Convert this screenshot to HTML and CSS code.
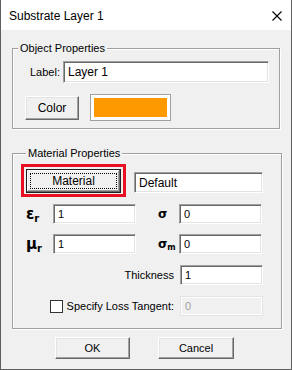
FILE: index.html
```html
<!DOCTYPE html>
<html lang="en">
<head>
    <meta charset="UTF-8" />
    <title>Substrate Layer 1</title>
    <link rel="stylesheet" href="styles.css">
</head>
<body>
<div class="window">
    <div class="titlebar">
        <span class="title">Substrate Layer 1</span>
        <svg class="close" width="10" height="10" viewBox="0 0 10 10">
            <path d="M0.5 0.5L9.5 9.5M9.5 0.5L0.5 9.5" stroke="#000" stroke-width="1.1" fill="none"/>
        </svg>
    </div>

    <div class="body">
        <!-- 对象属性 -->
        <fieldset class="group group-obj">
            <legend>Object Properties</legend>
            <div class="row label-row">
                <label for="layerName">Label:</label>
                <input id="layerName" class="field field-wide" value="Layer 1">
            </div>
            <div class="row color-row">
                <button class="btn btn-color">Color</button>
                <div class="swatch"><div class="swatch-fill"></div></div>
            </div>
        </fieldset>

        <!-- 材料属性 -->
        <fieldset class="group group-mat">
            <legend>Material Properties</legend>
            <div class="row mat-row">
                <div class="highlight">
                    <button class="btn btn-default"><span class="focus">Material</span></button>
                </div>
                <input class="field field-name" value="Default">
            </div>
            <div class="row prop-row">
                <span class="sym">&#949;<sub>r</sub></span>
                <input class="field field-num" value="1">
                <span class="sym sym-right">&#963;</span>
                <input class="field field-num" value="0">
            </div>
            <div class="row prop-row row-gap">
                <span class="sym">&#956;<sub>r</sub></span>
                <input class="field field-num" value="1">
                <span class="sym sym-right">&#963;<sub>m</sub></span>
                <input class="field field-num" value="0">
            </div>
            <div class="row end-row row-gap2">
                <span class="end-label">Thickness</span>
                <input class="field field-num" value="1">
            </div>
            <div class="row end-row row-gap2">
                <label class="check"><input type="checkbox" class="checkbox"> Specify Loss Tangent:</label>
                <input class="field field-num" value="0" disabled>
            </div>
        </fieldset>

        <div class="actions">
            <button class="btn btn-ok">OK</button>
            <button class="btn btn-cancel">Cancel</button>
        </div>
    </div>
</div>
</body>
</html>
```

FILE: styles.css
```css
/* -------------------- 基础 -------------------- */
body{
    margin:0;padding:0;
    font-family:'Liberation Sans',Arial,sans-serif;font-size:11px;color:#000;
    background:#f0f0f0;
}
.window{
    width:292px;height:370px;box-sizing:border-box;
    border:1px solid #5f5f5f;border-top:none;
    background:#f0f0f0;display:flex;flex-direction:column;
}

/* -------------------- 标题栏 -------------------- */
.titlebar{
    height:30px;background:#fff;flex:none;
    display:flex;align-items:center;justify-content:space-between;
    padding:0 9px 0 8px;
}
.title{font-size:12px;line-height:14px;margin-top:1px}
.close{display:block;margin-top:1px}

.body{padding:11px 12px 0 11px;display:flex;flex-direction:column}

/* -------------------- 分组框 -------------------- */
.group{
    margin:0;padding:0;width:268px;box-sizing:border-box;
    border:1px solid #a0a0a0;
    box-shadow:1px 1px 0 #fff,inset 1px 1px 0 #fff;
}
.group legend{
    padding:0 2px;margin-left:5px;line-height:14px;background:#f0f0f0;
}
.group-obj{padding-bottom:7px}
.group-mat{margin-top:17px;padding:0 18px 12px 8px}

.row{display:flex;align-items:center}

/* -------------------- 输入框 -------------------- */
.field{
    box-sizing:border-box;height:20px;margin:0;padding:0 4px;
    font:inherit;color:#000;background:#fff;
    border:1px solid;border-color:#a0a0a0 #fff #fff #a0a0a0;
    box-shadow:inset 1px 1px 0 #696969,inset -1px -1px 0 #e3e3e3;
    outline:none;
}
.field:disabled{
    background:#f0f0f0;color:#a0a0a0;
    border-color:#e3e3e3;box-shadow:inset 1px 1px 0 #fff,inset -1px -1px 0 #fff;
}
.field-wide{width:206px;height:22px;font-size:12px}
.field-name{width:129px;height:21px;margin:8px 0 0 8px;align-self:flex-start;font-size:12px}
.field-num{width:83px}

/* -------------------- 按钮 -------------------- */
.btn{
    box-sizing:border-box;margin:0;padding:0;
    font:inherit;color:#000;background:#f0f0f0;
    border:1px solid;border-color:#fff #696969 #696969 #fff;
    box-shadow:inset -1px -1px 0 #a0a0a0,inset 1px 1px 0 #e3e3e3;
}
.btn-color{width:54px;height:24px;font-size:12px}
.btn-default{
    width:95px;height:24px;padding:3px;display:flex;font-size:12px;
    border-color:#202020;
    box-shadow:inset -1px -1px 0 #696969,inset 1px 1px 0 #fff,inset -2px -2px 0 #a0a0a0;
}
.btn-default .focus{
    flex:1;border:1px dotted #000;
    display:flex;align-items:center;justify-content:center;
}
.btn-ok{width:75px;height:22px}
.btn-cancel{width:76px;height:22px}

/* -------------------- 对象属性 -------------------- */
.label-row{margin-top:6px;padding-left:17px}
.label-row label{width:33px}
.color-row{margin-top:11px;padding-left:12px;gap:11px}
.swatch{
    width:81px;height:27px;box-sizing:border-box;padding:3px;
    border:1px solid #a0a0a0;background:#fff;
}
.swatch-fill{height:100%;background:#ff9900}

/* -------------------- 材料属性 -------------------- */
.mat-row{margin-top:4px;align-items:flex-start}
.highlight{border:3px solid #e81123;padding:2px 2px 1px 2px}

.prop-row{margin-top:7px}
.row-gap{margin-top:10px}
.row-gap2{margin-top:11px}
.sym{
    width:32px;box-sizing:border-box;padding-left:5px;
    font-family:'DejaVu Sans',sans-serif;font-weight:bold;font-size:15px;line-height:20px;
}
.sym sub{font-size:10px;vertical-align:-3px;line-height:0}
.sym-right{width:43px;padding-left:22px;font-size:12px}
.sym-right sub{font-size:8px;vertical-align:-2px}

.end-row{justify-content:flex-end}
.end-label{margin-right:6px}
.check{display:flex;align-items:center;margin-right:6px}
.checkbox{
    appearance:none;margin:0 4px 0 0;width:13px;height:13px;box-sizing:border-box;
    background:#fff;border:1px solid #333;
}

/* -------------------- 底部按钮 -------------------- */
.actions{margin-top:8px;padding-left:43px;display:flex;gap:28px}
```
